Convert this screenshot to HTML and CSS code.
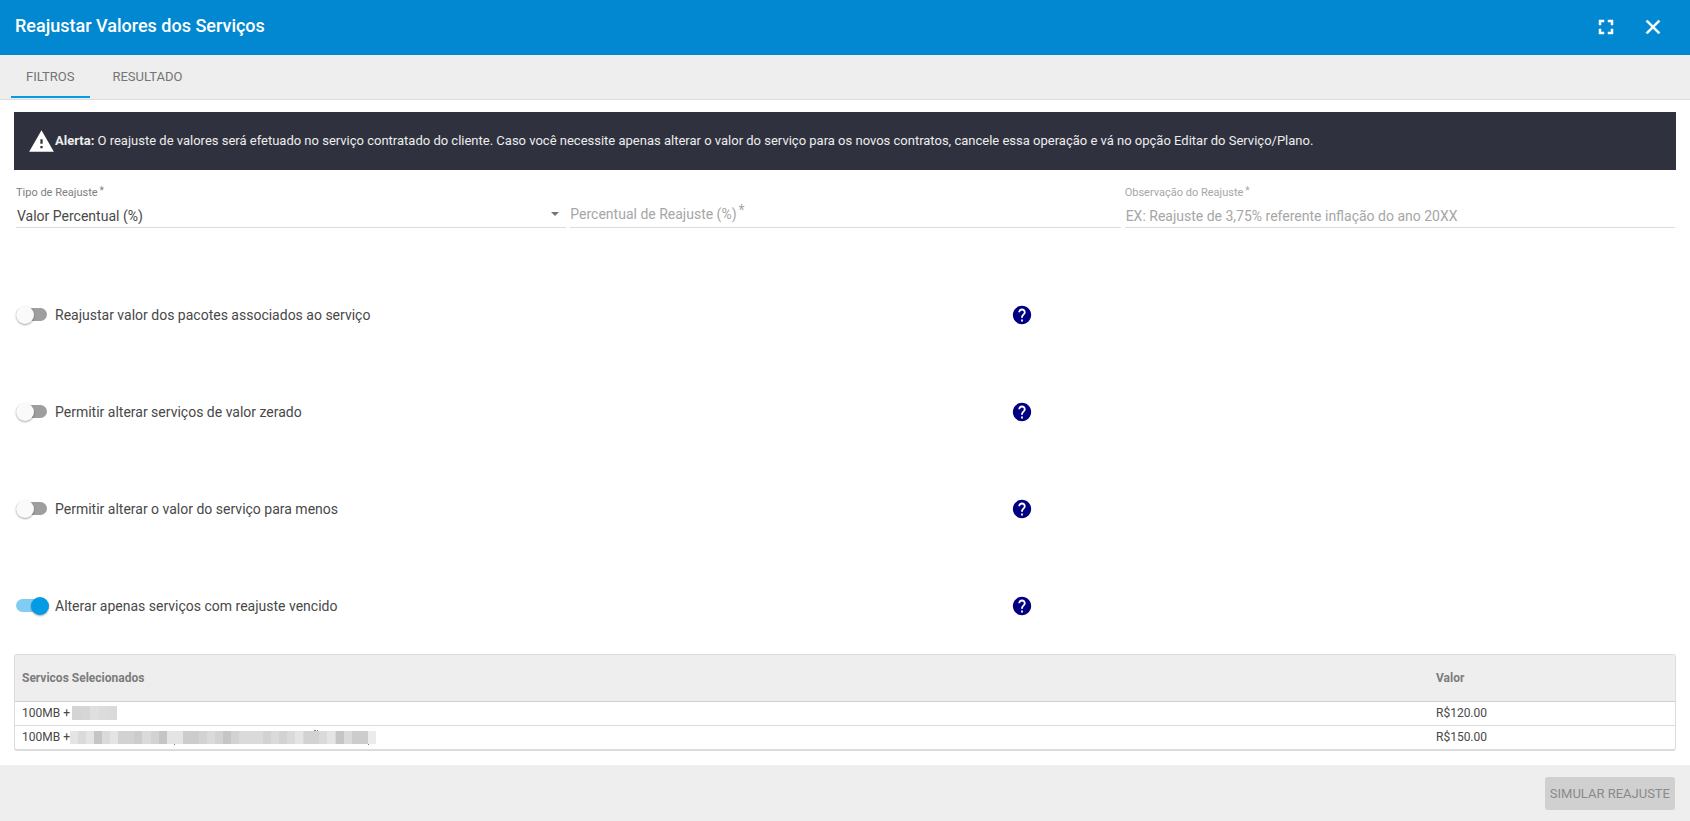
FILE: index.html
```html
<!DOCTYPE html>
<html lang="pt-BR">
<head>
<meta charset="utf-8">
<title>Reajustar Valores dos Serviços</title>
<link rel="stylesheet" href="styles.css">
</head>
<body>
<div class="dialog">
  <header class="toolbar">
    <h1 class="toolbar-title">Reajustar Valores dos Serviços</h1>
    <button class="icon-button" type="button" aria-label="Tela cheia"><svg viewBox="0 0 24 24"><path d="M7 14H5v5h5v-2H7v-3zm-2-4h2V7h3V5H5v5zm12 7h-3v2h5v-5h-2v3zM14 5v2h3v3h2V5h-5z"/></svg></button>
    <button class="icon-button" type="button" aria-label="Fechar"><svg viewBox="0 0 24 24"><path d="M19 6.41L17.59 5 12 10.59 6.41 5 5 6.41 10.59 12 5 17.59 6.41 19 12 13.41 17.59 19 19 17.59 13.41 12z"/></svg></button>
  </header>
  <nav class="tabs">
    <button class="tab tab-active" type="button">FILTROS</button>
    <button class="tab" type="button">RESULTADO</button>
  </nav>
  <main class="content">
    <div class="alert">
      <svg class="alert-icon" viewBox="0 0 24 24"><path d="M1 21h22L12 2 1 21zm12-3h-2v-2h2v2zm0-4h-2v-4h2v4z"/></svg>
      <p class="alert-text"><strong>Alerta:</strong> O reajuste de valores será efetuado no serviço contratado do cliente. Caso você necessite apenas alterar o valor do serviço para os novos contratos, cancele essa operação e vá no opção Editar do Serviço/Plano.</p>
    </div>
    <form class="fields">
      <div class="field">
        <label class="field-label field-label-set" for="tipo">Tipo de Reajuste<span class="star">*</span></label>
        <div class="select-wrap">
          <select class="control" id="tipo"><option>Valor Percentual (%)</option></select>
          <svg class="arrow" viewBox="0 0 8 4"><path d="M0 0h8L4 4z"/></svg>
        </div>
      </div>
      <div class="field field-empty">
        <label class="field-label field-label-large" for="percentual">Percentual de Reajuste (%)<span class="star">*</span></label>
        <input class="control" id="percentual" type="text">
      </div>
      <div class="field">
        <label class="field-label" for="obs">Observação do Reajuste<span class="star">*</span></label>
        <input class="control" id="obs" type="text" placeholder="EX: Reajuste de 3,75% referente inflação do ano 20XX">
      </div>
    </form>
    <div class="options">
      <div class="option">
        <label class="switch-label"><input class="switch" type="checkbox">Reajustar valor dos pacotes associados ao serviço</label>
        <svg class="help" viewBox="0 0 24 24"><use href="#help"/></svg>
      </div>
      <div class="option">
        <label class="switch-label"><input class="switch" type="checkbox">Permitir alterar serviços de valor zerado</label>
        <svg class="help" viewBox="0 0 24 24"><use href="#help"/></svg>
      </div>
      <div class="option">
        <label class="switch-label"><input class="switch" type="checkbox">Permitir alterar o valor do serviço para menos</label>
        <svg class="help" viewBox="0 0 24 24"><use href="#help"/></svg>
      </div>
      <div class="option">
        <label class="switch-label"><input class="switch" type="checkbox" checked>Alterar apenas serviços com reajuste vencido</label>
        <svg class="help" viewBox="0 0 24 24"><defs><path id="help" d="M12 2C6.48 2 2 6.48 2 12s4.48 10 10 10 10-4.48 10-10S17.52 2 12 2zm1 17h-2v-2h2v2zm2.07-7.75l-.9.92C13.45 12.9 13 13.5 13 15h-2v-.5c0-1.1.45-2.1 1.17-2.83l1.24-1.26c.37-.36.59-.86.59-1.41 0-1.1-.9-2-2-2s-2 .9-2 2H8c0-2.21 1.79-4 4-4s4 1.79 4 4c0 .88-.36 1.68-.93 2.25z"/></defs><use href="#help"/></svg>
      </div>
    </div>
    <div class="table-frame">
      <table class="services">
        <thead><tr><th class="col-name">Servicos Selecionados</th><th>Valor</th></tr></thead>
        <tbody>
          <tr>
            <td><span class="service">100MB +<svg class="mask mask-short" viewBox="0 0 45 14" shape-rendering="crispEdges"><path fill="#d4d4d4" d="M0 0h9v14H0z"/><path fill="#d6d6d6" d="M9 0h9v14H9z"/><path fill="#dfdfdf" d="M18 0h9v14h-9z"/><path fill="#dcdcdc" d="M27 0h9v14h-9z"/><path fill="#dadada" d="M36 0h9v14h-9z"/></svg></span></td>
            <td>R$120.00</td>
          </tr>
          <tr>
            <td><span class="service">100MB +<svg class="mask mask-long" viewBox="0 0 306 15" shape-rendering="crispEdges"><path fill="#dadada" d="M0 1h306v13H0z"/><path fill="#e4e4e4" d="M0 1h8v13H0zM16 1h8v13h-8zM40 1h8v13h-8zM97 1h16v13H97zM225 1h8v13h-8zM257 1h8v13h-8z"/><path fill="#c5c5c5" d="M24 1h8v13h-8zM89 1h8v13h-8zM153 1h8v13h-8zM266 1h8v13h-8z"/><path fill="#d2d2d2" d="M48 1h24v13H48zM81 1h8v13h-8zM129 1h8v13h-8zM145 1h8v13h-8zM161 1h8v13h-8zM193 1h8v13h-8zM209 1h8v13h-8zM234 1h15v13h-15z"/><path fill="#cccccc" d="M64 1h8v13h-8zM113 1h16v13h-16zM282 1h16v13h-16z"/><path fill="#ebebeb" d="M298 1h8v13h-8z"/><path fill="#777" d="M104 14h1v1h-1zM298 14h1v1h-1zM244 0h2v1h-2zM247 0h1v1h-1z"/></svg></span></td>
            <td>R$150.00</td>
          </tr>
        </tbody>
      </table>
    </div>
  </main>
  <footer class="footer">
    <button class="submit" type="button" disabled>SIMULAR REAJUSTE</button>
  </footer>
</div>
</body>
</html>
```
FILE: styles.css
```css
* { box-sizing: border-box; }

body {
  margin: 0;
  font-family: Roboto, "Liberation Sans", sans-serif;
  font-size: 14px;
  color: #484848;
  background: #fff;
}

button, input, select {
  font: inherit;
}

.dialog {
  display: flex;
  flex-direction: column;
  min-height: 100vh;
}

.toolbar {
  display: flex;
  align-items: center;
  gap: 7px;
  height: 55px;
  padding: 0 17px 2px 15px;
  background: #0288d1;
}

.toolbar-title {
  flex: 1;
  margin: 0;
  padding-bottom: 2px;
  font-size: 18px;
  font-weight: 500;
  line-height: 24px;
  color: #fff;
}

.icon-button {
  display: flex;
  align-items: center;
  justify-content: center;
  width: 40px;
  height: 40px;
  padding: 0;
  border: 0;
  background: none;
}

.icon-button svg {
  width: 24px;
  height: 24px;
  fill: #fff;
  stroke: #fff;
  stroke-width: 0.5;
}

.tabs {
  display: flex;
  height: 45px;
  padding: 0 11px;
  background: #eee;
  border-bottom: 1px solid #dcdcdc;
}

.tab {
  height: 43px;
  padding: 2px 15px 0;
  border: 0;
  border-bottom: 2px solid transparent;
  background: none;
  font-size: 13px;
  color: #757575;
}

.tab + .tab { margin-left: 7px; }

.tab-active {
  padding-right: 16px;
  border-bottom-color: #039be5;
}

.content {
  flex: 1;
  padding: 12px 14px 14px;
}

.alert {
  display: flex;
  align-items: center;
  min-height: 58px;
  padding: 0 14px;
  background: #2f323e;
  color: #ededed;
}

.alert-icon {
  flex: none;
  width: 27px;
  height: 27px;
  fill: #fff;
}

.alert-text {
  margin: 0;
  font-size: 13px;
  line-height: 20px;
}

.alert-text strong { font-weight: 700; }

.fields {
  display: grid;
  grid-template-columns: repeat(3, 1fr);
  gap: 4px;
  padding: 14px 1px 0 2px;
}

.field {
  display: flex;
  flex-direction: column;
  height: 44px;
  border-bottom: 1px solid #dcdcdc;
}

.field-empty { position: relative; }

.field-label {
  padding-top: 1px;
  font-size: 11px;
  line-height: 16px;
  color: #a6a6a6;
}

.field-label-set { color: #808080; }

.field-label-large {
  position: absolute;
  top: 19px;
  left: 0;
  font-size: 14px;
  line-height: 20px;
}

.field-empty .control { margin-top: 16px; }

.star {
  margin-left: 2px;
  font-size: 10px;
  vertical-align: top;
  line-height: 12px;
}

.field-label-large .star { font-size: 14px; }

.control {
  width: 100%;
  height: 26px;
  padding: 3px 1px 0;
  border: 0;
  outline: 0;
  background: transparent;
  color: #484848;
  appearance: none;
}

.control::placeholder { color: #a6a6a6; }

.select-wrap {
  display: flex;
  align-items: center;
}

.arrow {
  flex: none;
  width: 8px;
  height: 4px;
  margin-right: 7px;
  fill: #757575;
}

.options { padding: 38px 2px 0; }

.option {
  display: grid;
  grid-template-columns: 3fr 2fr;
  align-items: center;
  height: 97px;
}

.switch-label {
  display: flex;
  align-items: center;
  gap: 8px;
  line-height: 20px;
}

.switch {
  display: flex;
  align-items: center;
  appearance: none;
  width: 31px;
  height: 13px;
  margin: 0;
  border-radius: 7px;
  background: #9e9e9e;
}

.switch::before {
  content: "";
  width: 18px;
  height: 18px;
  border-radius: 50%;
  background: #fafafa;
  box-shadow: 0 1px 2px rgba(0, 0, 0, 0.35);
}

.switch:checked {
  justify-content: flex-end;
  background: #81cdf2;
}

.switch:checked::before {
  margin-right: -2px;
  background: #039be5;
}

.help {
  width: 22px;
  height: 22px;
  fill: #000080;
}

.table-frame {
  border: 1px solid #dcdcdc;
  border-bottom-width: 2px;
  border-radius: 3px;
  overflow: hidden;
}

.services {
  width: 100%;
  border-collapse: collapse;
  table-layout: fixed;
  font-size: 12px;
}

.col-name { width: 85%; }

.services th {
  height: 46px;
  padding: 0 10px;
  background: #eee;
  border-bottom: 1px solid #d0d0d0;
  font-weight: 700;
  text-align: left;
  color: #7c7c7c;
}

.services td {
  height: 24px;
  padding: 0 10px;
  border-bottom: 1px solid #dcdcdc;
}

.services th:first-child,
.services td:first-child { padding-left: 7px; }

.services tr:last-child td { border-bottom: 0; }

.service {
  display: flex;
  align-items: center;
}

.mask-short {
  width: 45px;
  height: 14px;
  margin-left: 2px;
}

.mask-long {
  width: 306px;
  height: 15px;
}

.footer {
  display: flex;
  align-items: center;
  justify-content: flex-end;
  height: 57px;
  padding: 0 15px;
  background: #eee;
}

.submit {
  height: 33px;
  padding: 0 5px;
  border: 0;
  border-radius: 3px;
  background: #d0d0d0;
  font-size: 13px;
  color: #8a8a8a;
}
```
